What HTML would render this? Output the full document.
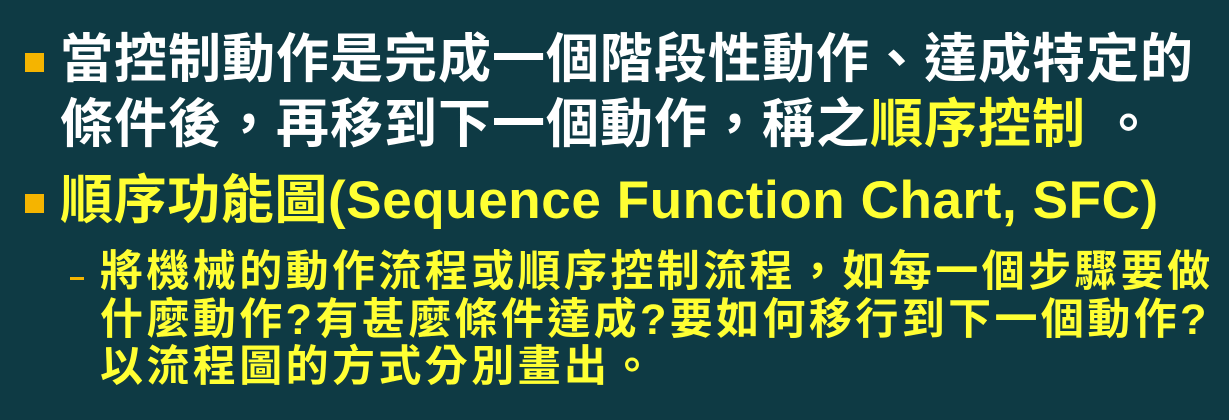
<!DOCTYPE html>
<html><head><meta charset="utf-8"><style>
html,body{margin:0;padding:0}
body{width:1229px;height:420px;background:#0e3a44;position:relative;overflow:hidden;font-family:"Liberation Sans","Noto Sans CJK TC",sans-serif;font-weight:bold}
.l{position:absolute;white-space:nowrap;line-height:1}
.w{color:#fff}
.y{color:#ffff33}
.big{font-size:53px;letter-spacing:1px}
.sm{font-size:43px;letter-spacing:3.4px}
.sq{position:absolute;width:19px;height:19px;background:#f5b400}
.dash{position:absolute;width:14px;height:3px;background:#f5b400}
</style></head><body>
<div class="sq" style="left:25px;top:53px"></div>
<div class="l big w" style="left:60px;top:33px">當控制動作是完成一個階段性動作、達成特定的</div>
<div class="l big w" style="left:60px;top:98px">條件後，再移到下一個動作，稱之<span class="y">順序控制</span> 。</div>
<div class="sq" style="left:25px;top:194px"></div>
<div class="l big y" style="left:60px;top:174px;letter-spacing:0.6px">順序功能圖(Sequence Function Chart, SFC)</div>
<div class="dash" style="left:70px;top:277px"></div>
<div class="l sm y" style="left:100px;top:251px">將機械的動作流程或順序控制流程，如每一個步驟要做</div>
<div class="l sm y" style="left:100px;top:299px">什麼動作?有甚麼條件達成?要如何移行到下一個動作?</div>
<div class="l sm y" style="left:100px;top:346px">以流程圖的方式分別畫出。</div>
</body></html>
